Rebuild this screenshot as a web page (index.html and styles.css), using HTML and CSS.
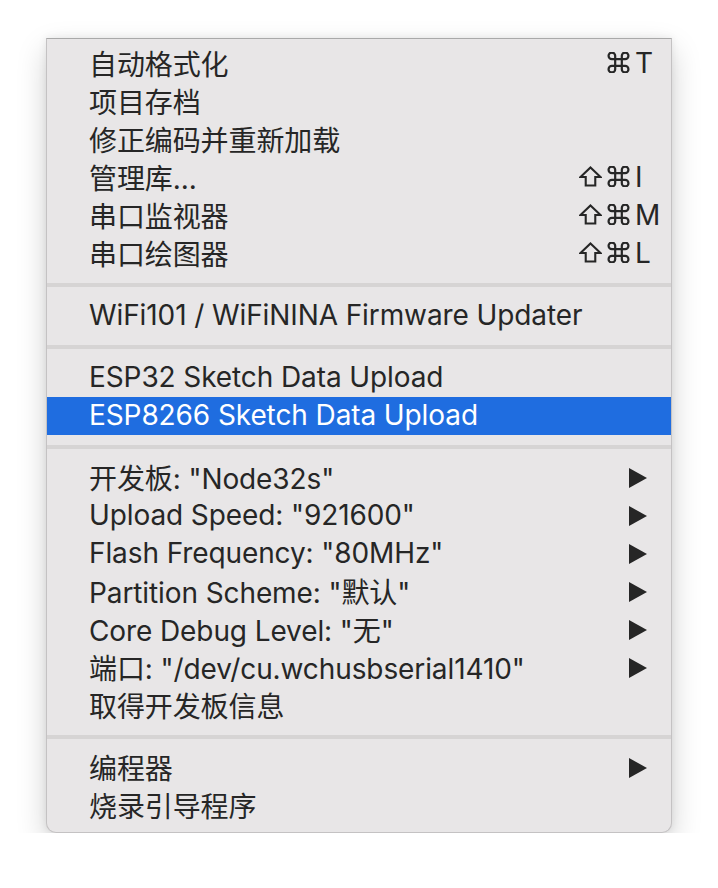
FILE: index.html
```html
<!DOCTYPE html>
<html lang="zh-CN">
<head>
<meta charset="utf-8">
<link rel="stylesheet" href="styles.css">
</head>
<body>
<svg width="0" height="0" class="defs" aria-hidden="true">
  <defs>
    <symbol id="cmd" viewBox="2.5 2.5 19 19"><path d="M15 6v12a3 3 0 1 0 3-3H6a3 3 0 1 0 3 3V6a3 3 0 1 0-3 3h12a3 3 0 1 0-3-3" fill="none" stroke="currentColor" stroke-width="2" stroke-linejoin="round"/></symbol>
    <symbol id="shift" viewBox="0 0 24 22"><path d="M12 1.5L22.5 11.5H17V20.5H7V11.5H1.5Z" fill="none" stroke="currentColor" stroke-width="2.2" stroke-linejoin="miter"/></symbol>
  </defs>
</svg>
<div class="menu">
  <div class="item"><span class="label">自动格式化</span><span class="keys"><span></span><svg class="k"><use href="#cmd"/></svg><span>T</span></span></div>
  <div class="item"><span class="label">项目存档</span></div>
  <div class="item"><span class="label">修正编码并重新加载</span></div>
  <div class="item"><span class="label">管理库...</span><span class="keys"><svg class="k sh"><use href="#shift"/></svg><svg class="k"><use href="#cmd"/></svg><span>I</span></span></div>
  <div class="item"><span class="label">串口监视器</span><span class="keys"><svg class="k sh"><use href="#shift"/></svg><svg class="k"><use href="#cmd"/></svg><span>M</span></span></div>
  <div class="item"><span class="label">串口绘图器</span><span class="keys"><svg class="k sh"><use href="#shift"/></svg><svg class="k"><use href="#cmd"/></svg><span>L</span></span></div>
  <div class="sep"></div>
  <div class="item"><span class="label">WiFi101 / WiFiNINA Firmware Updater</span></div>
  <div class="sep"></div>
  <div class="item"><span class="label">ESP32 Sketch Data Upload</span></div>
  <div class="item active"><span class="label">ESP8266 Sketch Data Upload</span></div>
  <div class="sep"></div>
  <div class="item"><span class="label">开发板: "Node32s"</span><span class="arrow"></span></div>
  <div class="item"><span class="label">Upload Speed: "921600"</span><span class="arrow"></span></div>
  <div class="item"><span class="label">Flash Frequency: "80MHz"</span><span class="arrow"></span></div>
  <div class="item"><span class="label">Partition Scheme: "默认"</span><span class="arrow"></span></div>
  <div class="item"><span class="label">Core Debug Level: "无"</span><span class="arrow"></span></div>
  <div class="item"><span class="label">端口: "/dev/cu.wchusbserial1410"</span><span class="arrow"></span></div>
  <div class="item"><span class="label">取得开发板信息</span></div>
  <div class="sep"></div>
  <div class="item"><span class="label">编程器</span><span class="arrow"></span></div>
  <div class="item"><span class="label">烧录引导程序</span></div>
</div>
</body>
</html>
```
FILE: styles.css
```css
html, body {
  margin: 0;
  padding: 0;
  background: #ffffff;
}
body {
  padding: 38px 0 0 46px;
  font-family: Inter, "Noto Sans CJK SC", sans-serif;
  font-size: 28px;
  color: #262626;
}
.defs {
  position: absolute;
  width: 0;
  height: 0;
  overflow: hidden;
}
.menu {
  width: 624px;
  background: #e8e6e7;
  border: 1px solid #c4c2c3;
  border-top-color: #a9a9a9;
  border-radius: 0 0 10px 10px;
  padding: 6px 0 7px;
  box-shadow: 0 12px 30px rgba(0, 0, 0, 0.18), 0 0 8px rgba(0, 0, 0, 0.08);
}
.item {
  display: flex;
  align-items: center;
  height: 38px;
  padding: 0 14px 0 42px;
  white-space: nowrap;
}
.item.active {
  background: #1f6de0;
  color: #ffffff;
}
.label {
  flex: 1;
  padding-bottom: 2px;
  letter-spacing: -0.1px;
}
.keys {
  display: grid;
  grid-template-columns: 28px 28px 22px;
  align-items: center;
  width: 78px;
  padding-bottom: 3px;
}
.k {
  width: 23px;
  height: 21px;
  color: #262626;
}
.arrow {
  width: 28px;
  height: 20px;
  display: flex;
}
.arrow::before {
  content: "";
  width: 0;
  height: 0;
  border-left: 18px solid #262626;
  border-top: 10px solid transparent;
  border-bottom: 10px solid transparent;
}
.sep {
  height: 4px;
  background: #d6d4d4;
  margin: 10px 0;
}
```
